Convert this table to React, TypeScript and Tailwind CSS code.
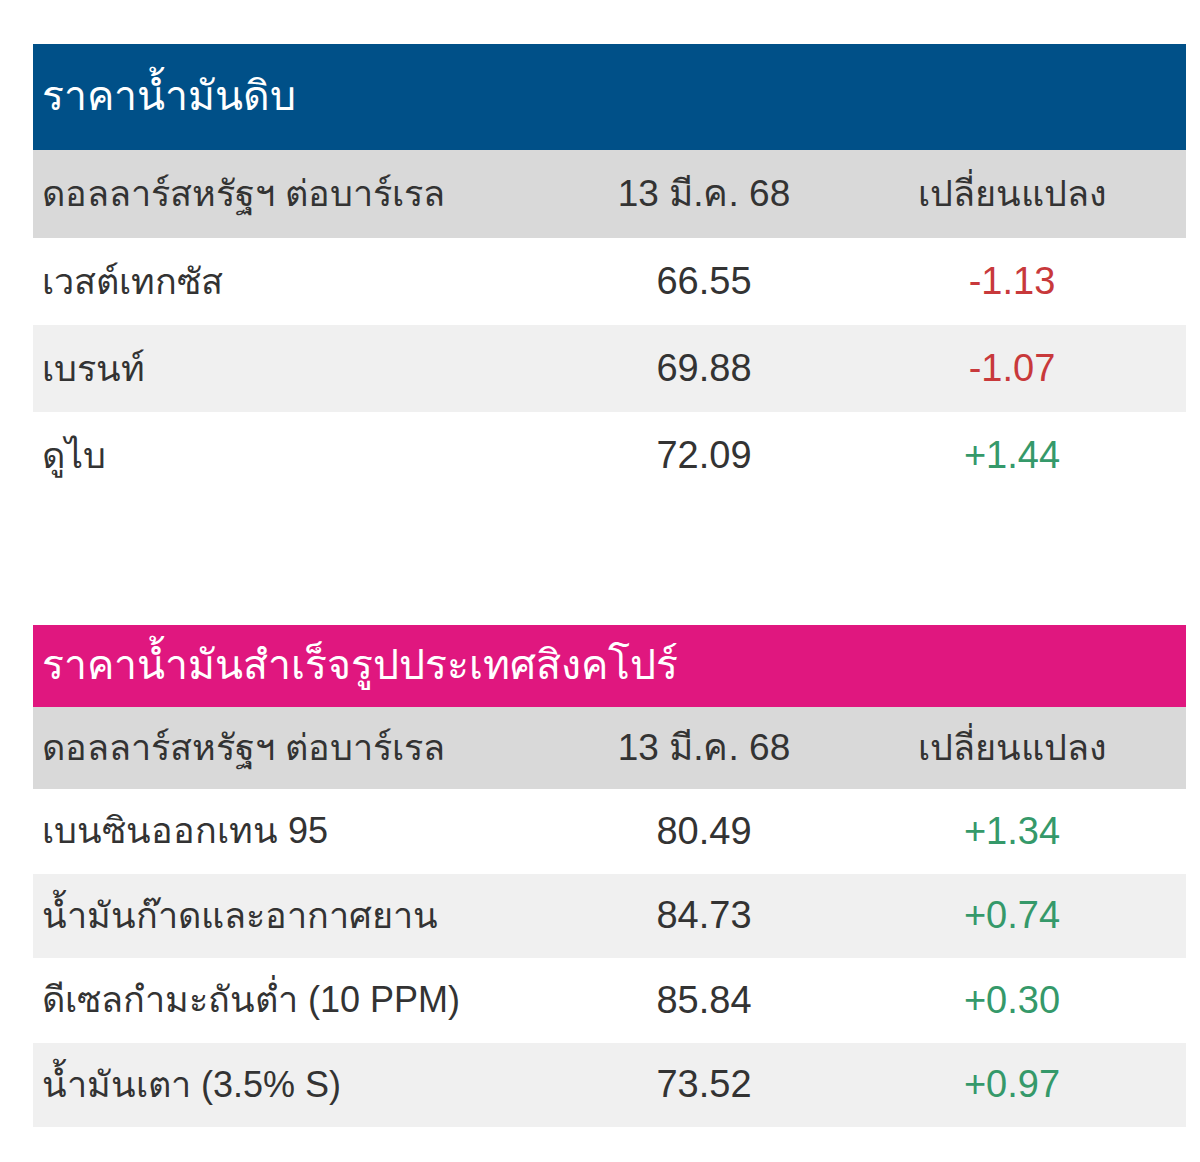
const crude = [
  { name: "เวสต์เทกซัส", price: "66.55", change: "-1.13" },
  { name: "เบรนท์", price: "69.88", change: "-1.07" },
  { name: "ดูไบ", price: "72.09", change: "+1.44" },
];

const refined = [
  { name: "เบนซินออกเทน 95", price: "80.49", change: "+1.34" },
  { name: "น้ำมันก๊าดและอากาศยาน", price: "84.73", change: "+0.74" },
  { name: "ดีเซลกำมะถันต่ำ (10 PPM)", price: "85.84", change: "+0.30" },
  { name: "น้ำมันเตา (3.5% S)", price: "73.52", change: "+0.97" },
];

type Row = { name: string; price: string; change: string };

function PriceTable({
  title,
  titleClass,
  headClass,
  rowClass,
  rows,
}: {
  title: string;
  titleClass: string;
  headClass: string;
  rowClass: string;
  rows: Row[];
}) {
  return (
    <div className="w-[1153px]">
      {/* Title */}
      <div className={`flex items-center px-[9px] text-white text-[41px] ${titleClass}`}>{title}</div>
      {/* Column heads */}
      <div className={`grid grid-cols-[537px_268px_348px] items-center bg-[#d9d9d9] text-[#333] text-[36px] ${headClass}`}>
        <div className="px-[9px]">ดอลลาร์สหรัฐฯ ต่อบาร์เรล</div>
        <div className="text-center text-[37px]">13 มี.ค. 68</div>
        <div className="text-center">เปลี่ยนแปลง</div>
      </div>
      {/* Rows */}
      {rows.map((r, i) => (
        <div
          key={r.name}
          className={`grid grid-cols-[537px_268px_348px] items-center text-[36px] text-[#333] ${rowClass} ${
            i % 2 === 1 ? "bg-[#f0f0f0]" : "bg-white"
          }`}
        >
          <div className="px-[9px]">{r.name}</div>
          <div className="text-center text-[38px]">{r.price}</div>
          <div
            className={`text-center text-[38px] ${r.change.startsWith("-") ? "text-[#c8393b]" : "text-[#35996a]"}`}
          >
            {r.change}
          </div>
        </div>
      ))}
    </div>
  );
}

export default function App() {
  return (
    <div className="min-h-[1162px] w-[1200px] bg-white pt-[44px] pl-[33px] font-['Liberation_Sans',sans-serif]">
      <PriceTable
        title="ราคาน้ำมันดิบ"
        titleClass="h-[106px] bg-[#005088]"
        headClass="h-[88px]"
        rowClass="h-[87px]"
        rows={crude}
      />
      <div className="h-[126px]" />
      <PriceTable
        title="ราคาน้ำมันสำเร็จรูปประเทศสิงคโปร์"
        titleClass="h-[82px] bg-[#e0177f]"
        headClass="h-[82px]"
        rowClass="h-[84.5px]"
        rows={refined}
      />
    </div>
  );
}
